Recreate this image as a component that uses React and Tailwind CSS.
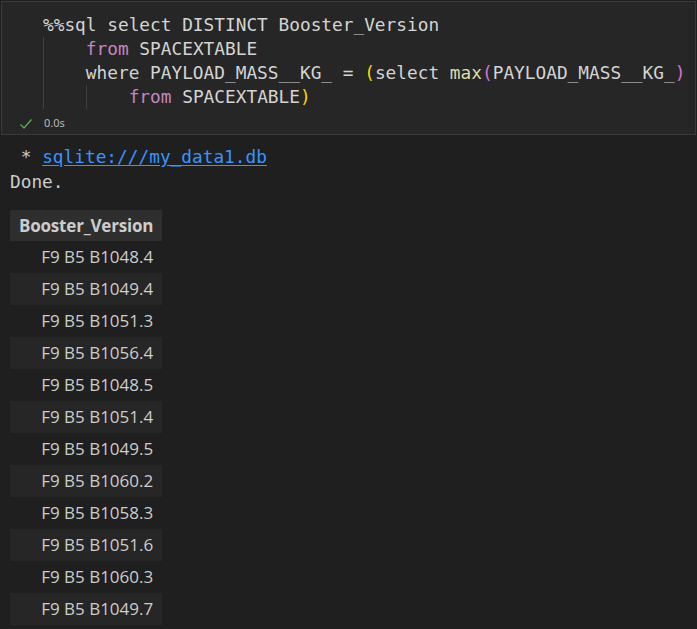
const rows = [
  "F9 B5 B1048.4",
  "F9 B5 B1049.4",
  "F9 B5 B1051.3",
  "F9 B5 B1056.4",
  "F9 B5 B1048.5",
  "F9 B5 B1051.4",
  "F9 B5 B1049.5",
  "F9 B5 B1060.2",
  "F9 B5 B1058.3",
  "F9 B5 B1051.6",
  "F9 B5 B1060.3",
  "F9 B5 B1049.7",
];

const mono = { fontFamily: '"DejaVu Sans Mono", "Liberation Mono", monospace' };

// one code line, left padded with indent guides
const Line = ({ guides = 0, children }) => (
  <div className="relative h-6 leading-6 whitespace-pre pl-[41px]">
    {guides > 0 && <span className="absolute left-[41px] top-0 h-6 w-px bg-[#404040]" />}
    {guides > 1 && <span className="absolute left-[84px] top-0 h-6 w-px bg-[#404040]" />}
    {children}
  </div>
);

const Kw = ({ children }) => <span className="text-[#c586c0]">{children}</span>;

export default function App() {
  return (
    <div className="min-h-screen bg-[#1f1f1f] pt-px">
      {/* Code cell */}
      <div className="border border-[#3a3a3a] bg-[#262626] mx-px">
        <div className="pt-[11px] text-[17.8px] text-[#d4d4d4]" style={mono}>
          <Line>%%sql select DISTINCT Booster_Version</Line>
          <Line guides={1}>    <Kw>from</Kw> SPACEXTABLE</Line>
          <Line guides={1}>
            {"    where PAYLOAD_MASS__KG_ = "}
            <span className="text-[#ffd700]">(</span>select <span className="text-[#dcdcaa]">max</span>
            <span className="text-[#da70d6]">(</span>PAYLOAD_MASS__KG_<span className="text-[#da70d6]">)</span>
          </Line>
          <Line guides={2}>
            {"        "}<Kw>from</Kw> SPACEXTABLE<span className="text-[#ffd700]">)</span>
          </Line>
        </div>
        {/* status */}
        <div className="flex items-center h-[25px] pt-[4px] pl-[17px] gap-[11px]">
          <svg width="14" height="12" viewBox="0 0 14 12" fill="none">
            <path d="M1.5 6.5 L5 10 L12.5 1.5" stroke="#5aa55a" strokeWidth="1.4" />
          </svg>
          <span className="text-[11px] text-[#b8b8b8]" style={{ fontFamily: '"Noto Sans", sans-serif' }}>
            0.0s
          </span>
        </div>
      </div>

      {/* Output */}
      <div className="pl-[10px] pt-[9px] text-[17.8px] text-[#cccccc]" style={mono}>
        <div className="h-[25px] leading-[25px] whitespace-pre">
          {" * "}
          <span className="text-[#3794ff] underline underline-offset-2">sqlite:///my_data1.db</span>
        </div>
        <div className="h-[25px] leading-[25px]">Done.</div>
      </div>

      <table
        className="ml-[10px] mt-[16px] border-collapse text-[17px] text-[#cccccc]"
        style={{ fontFamily: '"Open Sans", "Noto Sans", sans-serif' }}
      >
        <thead>
          <tr className="bg-[#2e2e2e]">
            <th className="h-[31px] pl-[9px] pr-[9px] text-right font-bold tracking-[-0.2px]">Booster_Version</th>
          </tr>
        </thead>
        <tbody>
          {rows.map((r, i) => (
            <tr key={i} className={i % 2 === 1 ? "bg-[#262626]" : ""}>
              <td className="h-[32px] pr-[9px] text-right">{r}</td>
            </tr>
          ))}
        </tbody>
      </table>
    </div>
  );
}
